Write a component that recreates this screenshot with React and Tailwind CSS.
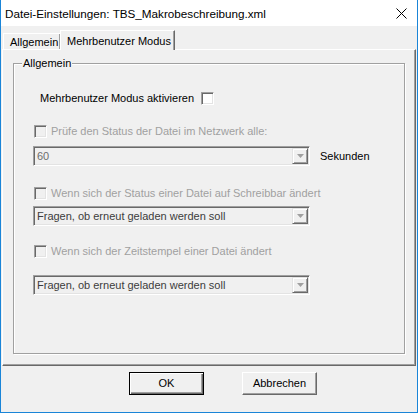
import React from "react";

const font = { fontFamily: '"Liberation Sans", Arial, sans-serif' };

function CheckBox({ disabled }) {
  return (
    <div
      className={`w-[13px] h-[13px] shrink-0 border border-t-[#a0a0a0] border-l-[#a0a0a0] border-b-white border-r-white shadow-[inset_1px_1px_0_#696969,inset_-1px_-1px_0_#e3e3e3] ${
        disabled ? "bg-[#f0f0f0]" : "bg-white"
      }`}
    />
  );
}

function Combo({ value, dark }) {
  return (
    <div className="w-[277px] h-[20px] shrink-0 flex items-center border border-t-[#a0a0a0] border-l-[#a0a0a0] border-b-white border-r-white shadow-[inset_1px_1px_0_#696969,inset_-1px_-1px_0_#e3e3e3] p-[1px]">
      <div
        className={`flex-1 pl-[2px] text-[11px] leading-[16px] ${
          dark ? "text-[#3c3c3c]" : "text-[#6d6d6d]"
        }`}
      >
        {value}
      </div>
      <div className="w-[16px] h-[16px] flex items-center justify-center bg-[#f0f0f0] border-t border-l border-t-[#e3e3e3] border-l-[#e3e3e3] border-b border-r border-b-[#696969] border-r-[#696969] shadow-[inset_1px_1px_0_white,inset_-1px_-1px_0_#a0a0a0]">
        <svg width="7" height="4" viewBox="0 0 7 4">
          <path d="M0 0h7L3.5 4z" fill="#a0a0a0" />
        </svg>
      </div>
    </div>
  );
}

function CheckRow({ label, className }) {
  return (
    <div className={`flex items-center gap-[4px] pl-[20px] h-[13px] ${className}`}>
      <CheckBox disabled />
      <span className="text-[11px] text-[#a0a0a0] whitespace-nowrap">{label}</span>
    </div>
  );
}

export default function App() {
  return (
    <div
      style={font}
      className="w-[418px] h-[413px] bg-[#f0f0f0] border-l border-r border-b border-[#1a85d8] flex flex-col text-black"
    >
      {/* title bar */}
      <div className="h-[26px] bg-white flex items-center justify-between pl-[4px] pr-[10px]">
        <span className="text-[11.7px] leading-[16px] mt-[2px]">
          Datei-Einstellungen: TBS_Makrobeschreibung.xml
        </span>
        <svg width="11" height="11" viewBox="0 0 11 11" className="mt-[1px]">
          <path d="M0.5 0.5L10.5 10.5M10.5 0.5L0.5 10.5" stroke="#000" strokeWidth="1" />
        </svg>
      </div>

      {/* tabs + page */}
      <div className="mt-[4px] ml-[1px] mr-[1px] flex flex-col">
        <div className="flex items-end h-[19px]">
          <div className="ml-[1px] w-[57px] h-[16px] border-t border-l border-white shadow-[inset_-1px_0_0_#a0a0a0] flex items-center pl-[6px] pt-[1px] text-[11px]">
            Allgemein
          </div>
          <div className="relative z-10 -mb-px w-[115px] h-[20px] bg-[#f0f0f0] border-t border-l border-white border-r border-r-[#696969] shadow-[inset_-1px_0_0_#a0a0a0] flex items-start pt-[2px] pl-[6px] text-[11px]">
            Mehrbenutzer Modus
          </div>
        </div>

        <div className="h-[317px] border border-t-white border-l-white border-r-[#696969] border-b-[#696969] shadow-[inset_-1px_-1px_0_#a0a0a0] pt-[13px] px-[10px]">
          {/* group box */}
          <div className="h-[291px] border border-[#a0a0a0] shadow-[inset_1px_1px_0_white,1px_1px_0_white] flex flex-col">
            <span className="-mt-[7px] ml-[8px] w-fit px-[1px] bg-[#f0f0f0] text-[11px] leading-[13px]">
              Allgemein
            </span>

            <div className="mt-[22px] flex items-center gap-[7px] pl-[26px] h-[13px]">
              <span className="text-[11px] whitespace-nowrap">Mehrbenutzer Modus aktivieren</span>
              <CheckBox />
            </div>

            <CheckRow className="mt-[20px]" label="Prüfe den Status der Datei im Netzwerk alle:" />

            <div className="mt-[8px] ml-[19px] flex items-center gap-[10px]">
              <Combo value="60" />
              <span className="text-[11px]">Sekunden</span>
            </div>

            <CheckRow
              className="mt-[21px]"
              label="Wenn sich der Status einer Datei auf Schreibbar ändert"
            />

            <div className="mt-[6px] ml-[19px] flex">
              <Combo value="Fragen, ob erneut geladen werden soll" dark />
            </div>

            <CheckRow className="mt-[19px]" label="Wenn sich der Zeitstempel einer Datei ändert" />

            <div className="mt-[17px] ml-[19px] flex">
              <Combo value="Fragen, ob erneut geladen werden soll" dark />
            </div>
          </div>
        </div>
      </div>

      {/* buttons */}
      <div className="mt-[6px] flex pl-[128px] gap-[38px]">
        <button className="w-[75px] h-[23px] border border-black bg-[#f0f0f0] shadow-[inset_1px_1px_0_white,inset_-1px_-1px_0_#696969,inset_-2px_-2px_0_#a0a0a0] text-[11px]">
          OK
        </button>
        <button className="w-[75px] h-[23px] border border-t-white border-l-white border-b-[#696969] border-r-[#696969] bg-[#f0f0f0] shadow-[inset_-1px_-1px_0_#a0a0a0] text-[11px]">
          Abbrechen
        </button>
      </div>
    </div>
  );
}
